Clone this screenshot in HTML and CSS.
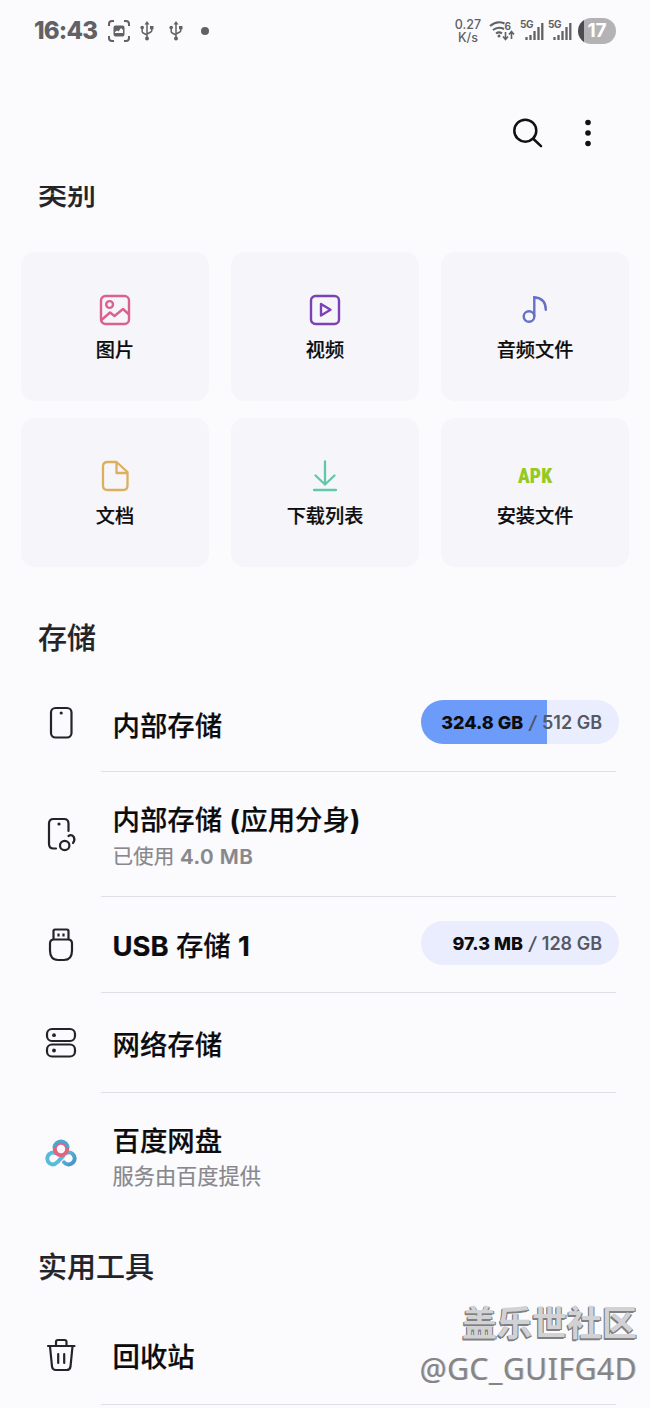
FILE: index.html
```
<!DOCTYPE html>
<html lang="zh-CN">
<head>
<meta charset="utf-8">
<title>我的文件</title>
<link rel="stylesheet" href="styles.css">
</head>
<body>
<div class="screen">
  <header class="status">
    <span class="clock">16:43</span>
    <svg class="st-shot" width="22" height="22" viewBox="0 0 22 22"><g fill="none" stroke="#626264" stroke-width="2"><path d="M1 6V4q0-3 3-3h2M16 1h2q3 0 3 3v2M21 16v2q0 3-3 3h-2M6 21H4q-3 0-3-3v-2"/></g><path d="M7.500 5.500h7q2 0 2 2v7q0 2-2 2h-7q-2 0-2-2v-7q0-2 2-2zM7 13h8v-3l-2-2-2.500 3.500-1.500-1-2 1.500z" fill="#626264" fill-rule="evenodd"/></svg>
    <svg class="st-usb" width="14" height="20" viewBox="0 0 14 20"><path d="M7 2v15M2.200 7v3.500q0 1 1 1.500L7 14M11.800 7v2.500q0 1-1 1.500L7 13" fill="none" stroke="#626264" stroke-width="1.500"/><path d="M7 0l2.500 3.500h-5z" fill="#626264"/><circle cx="7" cy="17.500" r="2" fill="#626264"/><circle cx="2.200" cy="6.500" r="1.800" fill="#626264"/><path d="M10 5h3.500v3.300H10z" fill="#626264"/></svg>
    <svg class="st-usb" width="14" height="20" viewBox="0 0 14 20"><path d="M7 2v15M2.200 7v3.500q0 1 1 1.500L7 14M11.800 7v2.500q0 1-1 1.500L7 13" fill="none" stroke="#626264" stroke-width="1.500"/><path d="M7 0l2.500 3.500h-5z" fill="#626264"/><circle cx="7" cy="17.500" r="2" fill="#626264"/><circle cx="2.200" cy="6.500" r="1.800" fill="#626264"/><path d="M10 5h3.500v3.300H10z" fill="#626264"/></svg>
    <span class="st-dot"></span>
    <span class="speed"><span>0.27</span><span>K/s</span></span>
    <svg class="st-wifi" width="27" height="22" viewBox="0 0 27 22"><g fill="none" stroke="#626264" stroke-width="2"><path d="M1 6Q8 0 15.500 3.500M4 10q5-4 11-1M7 13.500q3-2.300 6 0"/></g><circle cx="10" cy="16" r="1.500" fill="#626264"/><text x="15.500" y="9.500" class="tiny">6</text><path d="M16.500 12v7M14 16.500l2.500 3 2.500-3M22.500 19v-7M20 14.500l2.500-3 2.500 3" fill="none" stroke="#626264" stroke-width="1.600"/></svg>
    <svg class="st-sig" width="24" height="26" viewBox="0 -2 24 26"><text x="0" y="8" class="tiny">5G</text><path d="M6.500 17v3M10.500 15v5M14.500 11v9M18.500 7v13M22.300 3v17" stroke="#626264" stroke-width="2.300"/></svg>
    <svg class="st-sig two" width="24" height="26" viewBox="0 -2 24 26"><text x="0" y="8" class="tiny">5G</text><path d="M6.500 17v3M10.500 15v5M14.500 11v9M18.500 7v13M22.300 3v17" stroke="#626264" stroke-width="2.300"/></svg>
    <span class="battery">17</span>
  </header>

  <nav class="toolbar">
    <svg width="32" height="32" viewBox="0 0 32 32" fill="none" stroke="#111" stroke-width="2.500" stroke-linecap="round"><circle cx="13.300" cy="13.700" r="11"/><path d="M21.500 22l7.500 7.200"/></svg>
    <svg width="8" height="28" viewBox="0 0 8 28" fill="#111"><circle cx="4" cy="3.500" r="2.800"/><circle cx="4" cy="14" r="2.800"/><circle cx="4" cy="24.500" r="2.800"/></svg>
  </nav>

  <main class="content">
    <h2 class="heading first">类别</h2>
    <section class="grid">
      <div class="card"><svg width="32" height="32" viewBox="0 0 32 32" fill="none" stroke="#d9638c" stroke-width="2.400" stroke-linejoin="round"><rect x="2" y="2" width="28" height="28" rx="4.500"/><circle cx="10.600" cy="10.500" r="3.400"/><path d="M2.500 26l8.500-7.500 4.500 3.500 8.500-7 6 5.500"/></svg><span>图片</span></div>
      <div class="card"><svg width="32" height="32" viewBox="0 0 32 32" fill="none" stroke="#7b42b5" stroke-width="2.400" stroke-linejoin="round"><rect x="2" y="2" width="28" height="28" rx="4.500"/><path d="M12 10v11.500l9.500-5.700z"/></svg><span>视频</span></div>
      <div class="card"><svg width="32" height="32" viewBox="0 0 32 32" fill="none" stroke="#6670c4" stroke-width="2.400" stroke-linecap="round"><circle cx="10" cy="22.500" r="5.300"/><path d="M15.300 22V3.200q11.500 1 11.500 12.500"/></svg><span>音频文件</span></div>
      <div class="card"><svg width="32" height="32" viewBox="0 0 32 32" fill="none" stroke="#dcae5e" stroke-width="2.300" stroke-linejoin="round"><path d="M8.500 2h9L28.500 12v13.500q0 4.500-4.500 4.500H8.500q-4.500 0-4.500-4.500v-19Q4 2 8.500 2zM17.500 2v11h11"/></svg><span>文档</span></div>
      <div class="card"><svg width="32" height="32" viewBox="0 0 32 32" fill="none" stroke="#62c7a8" stroke-width="2.300" stroke-linecap="round"><path d="M16 1.500v22.500M6.500 15.500l9.500 9 9.500-9M5 30h22"/></svg><span>下载列表</span></div>
      <div class="card"><b class="apk">APK</b><span>安装文件</span></div>
    </section>

    <h2 class="heading second">存储</h2>
    <section class="list">
      <div class="row r1">
        <svg width="38" height="38" viewBox="0 0 38 38" fill="none" stroke="#242428" stroke-width="2.200"><rect x="9" y="4" width="20.500" height="29.500" rx="4.500"/><circle cx="19.200" cy="9" r="1.600" fill="#242428" stroke="none"/></svg>
        <div class="body"><span class="title">内部存储</span><span class="pill used"><b>324.8 GB</b><i>/</i><em>512 GB</em></span></div>
      </div>
      <div class="row r2">
        <svg width="38" height="38" viewBox="0 0 38 38" fill="none" stroke="#242428" stroke-width="2.200" stroke-linecap="round"><path d="M14 33.500h-2.500q-4.500 0-4.500-4.500V8.500Q7 4 11.500 4H22q4.500 0 4.500 4.500V16"/><circle cx="17" cy="9" r="1.600" fill="#242428" stroke="none"/><circle cx="22.700" cy="30.500" r="4.700"/><path d="M26.500 21q3-2 5.300 1 1.500 3.500-.8 6"/></svg>
        <div class="body stack"><span class="title">内部存储 <span class="paren">(</span>应用分身<span class="paren">)</span></span><span class="sub">已使用 <span class="lat">4.0 MB</span></span></div>
      </div>
      <div class="row r3">
        <svg width="38" height="38" viewBox="0 0 38 38" fill="none" stroke="#242428" stroke-width="2.200"><path d="M11.500 13.500V5q0-1.500 1.500-1.500h12Q26.500 3.500 26.500 5v8.500M12 13.500h14q4 0 4 4v7q0 9.500-8 9.500h-6q-8 0-8-9.500v-7q0-4 4-4z"/><path d="M16.500 7.500v3M21.500 7.500v3"/></svg>
        <div class="body"><span class="title"><span class="usb">USB</span> 存储 <span class="usb">1</span></span><span class="pill"><b>97.3 MB</b><i>/</i><em>128 GB</em></span></div>
      </div>
      <div class="row r4">
        <svg width="38" height="38" viewBox="0 0 38 38" fill="none" stroke="#242428" stroke-width="2.200"><rect x="5" y="5" width="28" height="12" rx="5"/><rect x="5" y="20.500" width="28" height="12" rx="5"/><g fill="#242428" stroke="none"><circle cx="12" cy="11.200" r="1.900"/><circle cx="12" cy="26.500" r="1.900"/></g></svg>
        <div class="body"><span class="title">网络存储</span></div>
      </div>
      <div class="row r5">
        <svg width="38" height="38" viewBox="0 0 38 38" fill="none" stroke-width="4">
          <defs><linearGradient id="bl" x1="0" y1="0" x2="1" y2="1"><stop offset="0" stop-color="#5cc0de"/><stop offset="1" stop-color="#468fc6"/></linearGradient></defs>
          <path d="M14.500 18.500A6 6 0 1 0 10.500 29.500q2.800 0 5-2.500l6.500-6.800" stroke="#58bbdc"/>
          <path d="M24.500 17.800a6 6 0 1 1-2.500 9.500" stroke="url(#bl)" stroke-linecap="round"/>
          <circle cx="19" cy="14" r="6.200" stroke="#e2647f" stroke-width="4"/>
          <path d="M12 13a7 7 0 0 1 14 0" stroke="#4aa7d3" stroke-width="3.200"/>
        </svg>
        <div class="body stack last"><span class="title">百度网盘</span><span class="sub wide">服务由百度提供</span></div>
      </div>
    </section>

    <h2 class="heading third">实用工具</h2>
    <div class="row r6">
      <svg width="38" height="38" viewBox="0 0 38 38" fill="none" stroke="#242428" stroke-width="2.200" stroke-linecap="round" stroke-linejoin="round"><path d="M6 10h26.500M14 9.500V6q0-2 2-2h6.500q2 0 2 2v3.500M8 10.500l2 20q.4 3.500 4 3.500h10.500q3.500 0 4-3.500l2-20M16.200 18v9M22.200 18v9"/></svg>
      <div class="body"><span class="title">回收站</span></div>
    </div>
  </main>

  <div class="mark"><span class="mark-name">盖乐世社区</span><span class="mark-user">@GC_GUIFG4D</span></div>
</div>
</body>
</html>
```
FILE: styles.css
```
* { box-sizing: border-box; }
body {
  margin: 0;
  background: #fbfbfe;
  color: #0c0c0e;
  font-family: Inter, "Noto Sans CJK SC", sans-serif;
}
.screen {
  position: relative;
  display: flex;
  flex-direction: column;
  width: 650px;
  height: 1408px;
  overflow: hidden;
}

/* status bar */
.status {
  display: flex;
  align-items: center;
  height: 60px;
  padding: 1px 34px 0;
  color: #626264;
}
.clock { width: 74px; font-size: 24px; font-weight: 800; line-height: 30px; letter-spacing: -0.8px; }
.st-usb { margin-left: 10px; }
.st-usb + .st-usb { margin-left: 15px; }
.st-dot { width: 8px; height: 8px; margin-left: 18px; border-radius: 50%; background: #626264; }
.speed {
  display: flex;
  flex-direction: column;
  align-items: center;
  width: 26px;
  margin-left: auto;
  font-size: 12.5px;
  font-weight: 500;
  line-height: 13px;
}
.st-wifi { margin-left: 8px; }
.st-sig { margin-left: 4px; }
.st-sig.two { margin-left: 4px; }
.tiny { font: 700 10px Inter, sans-serif; fill: #626264; letter-spacing: -0.5px; }
.battery {
  width: 38px;
  height: 26px;
  margin-left: 6px;
  border-radius: 13px;
  background: linear-gradient(90deg, #4c4c4e 6px, #b3b3b5 6px);
  color: #fff;
  font-size: 19px;
  font-weight: 700;
  line-height: 26px;
  text-align: center;
}

/* actions */
.toolbar {
  display: flex;
  justify-content: flex-end;
  align-items: center;
  gap: 40px;
  height: 126px;
  padding: 19px 58px 0 0;
}

/* scrolling content */
.content { flex: 1; overflow: hidden; }
.heading {
  margin: 0;
  padding-left: 38px;
  color: #242428;
  font-size: 29px;
  font-weight: 500;
  line-height: 40px;
  -webkit-text-stroke: 0.2px currentColor;
}
.first { margin-top: -11px; }
.second { margin-top: 52px; }
.third { margin-top: 41px; }
.grid {
  display: grid;
  grid-template-columns: repeat(3, 188px);
  grid-auto-rows: 149px;
  gap: 17px 22px;
  padding: 36.5px 21px 0;
}
.card {
  display: flex;
  flex-direction: column;
  align-items: center;
  padding-top: 42px;
  border-radius: 14px;
  background: #f6f6fa;
  font-size: 19.2px;
  font-weight: 500;
  line-height: 28px;
  -webkit-text-stroke: 0.2px currentColor;
}
.card span { margin-top: 10px; }
.apk {
  height: 32px;
  color: #94c920;
  font: 800 20.5px/32px Roboto, sans-serif;
  font-stretch: 75%;
  letter-spacing: 0.2px;
  transform: scaleX(0.95);
}

.row { display: flex; align-items: center; padding: 0 34px 0 42px; }
.row > svg { flex: none; }
.body {
  display: flex;
  align-items: center;
  justify-content: space-between;
  flex: 1;
  align-self: stretch;
  margin-left: 21px;
  padding-left: 11.5px;
  border-bottom: 1px solid #dfdfe5;
}
.last { border-bottom: 0; }
.stack { flex-direction: column; align-items: flex-start; justify-content: flex-start; }
.title {
  padding-top: 6px;
  font-size: 27.4px;
  font-weight: 500;
  line-height: 40px;
  white-space: nowrap;
  -webkit-text-stroke: 0.2px currentColor;
}
.r3 .title { padding-top: 3px; }
.r4 .title { padding-top: 5px; }
.stack .title { padding-top: 0; }
.sub { margin-top: 1px; color: #88888c; font-size: 20.6px; line-height: 30px; white-space: nowrap; -webkit-text-stroke: 0.2px currentColor; }
.wide { margin-top: 0; font-size: 21.2px; }
.lat { font-weight: 600; letter-spacing: 0.5px; }
.usb { font-weight: 700; }
.paren { font-weight: 700; letter-spacing: 0.6px; }
.r1 { height: 97px; margin-top: 16px; }
.r2 { height: 125px; }
.r2 .body { padding-top: 28px; }
.r2 .sub { margin-top: 2px; }
.r3 { height: 96px; }
.r4 { height: 100px; }
.r5 { height: 114px; }
.r5 svg { margin-top: 9px; }
.r5 .body { padding-top: 28px; }
.r6 { height: 100px; margin-top: 17px; }

.pill {
  display: flex;
  align-items: center;
  justify-content: flex-end;
  width: 198px;
  height: 44px;
  margin-right: -3px;
  padding: 1px 17px 0 0;
  border-radius: 22px;
  background: #e9edfd;
  font-size: 18px;
  white-space: nowrap;
  transform: translateY(-1px);
}
.used { background: linear-gradient(90deg, #6c9bf9 126px, #e9edfd 126px); }
.pill b { font-weight: 800; }
.pill i { margin: 0 6px; color: #505564; font-weight: 600; }
.pill em { color: #555865; font-style: normal; font-weight: 600; }

/* community stamp laid over the list */
.mark {
  position: absolute;
  right: 13px;
  bottom: 17px;
  display: flex;
  flex-direction: column;
  align-items: flex-end;
  white-space: nowrap;
}
.mark-name {
  margin-bottom: 3px;
  color: #d2d2d4;
  font: 700 35px/46px "Noto Sans CJK SC", sans-serif;
  text-shadow: -1px 1px 0 #808082, -1px 2px 0 #808082, 1px 1px 0 #808082;
}
.mark-user {
  color: #858588;
  font: 400 30px/44px "Noto Sans", sans-serif;
  letter-spacing: 0.55px;
  text-shadow: 1px 0 0 #c8c8cc;
}
```
